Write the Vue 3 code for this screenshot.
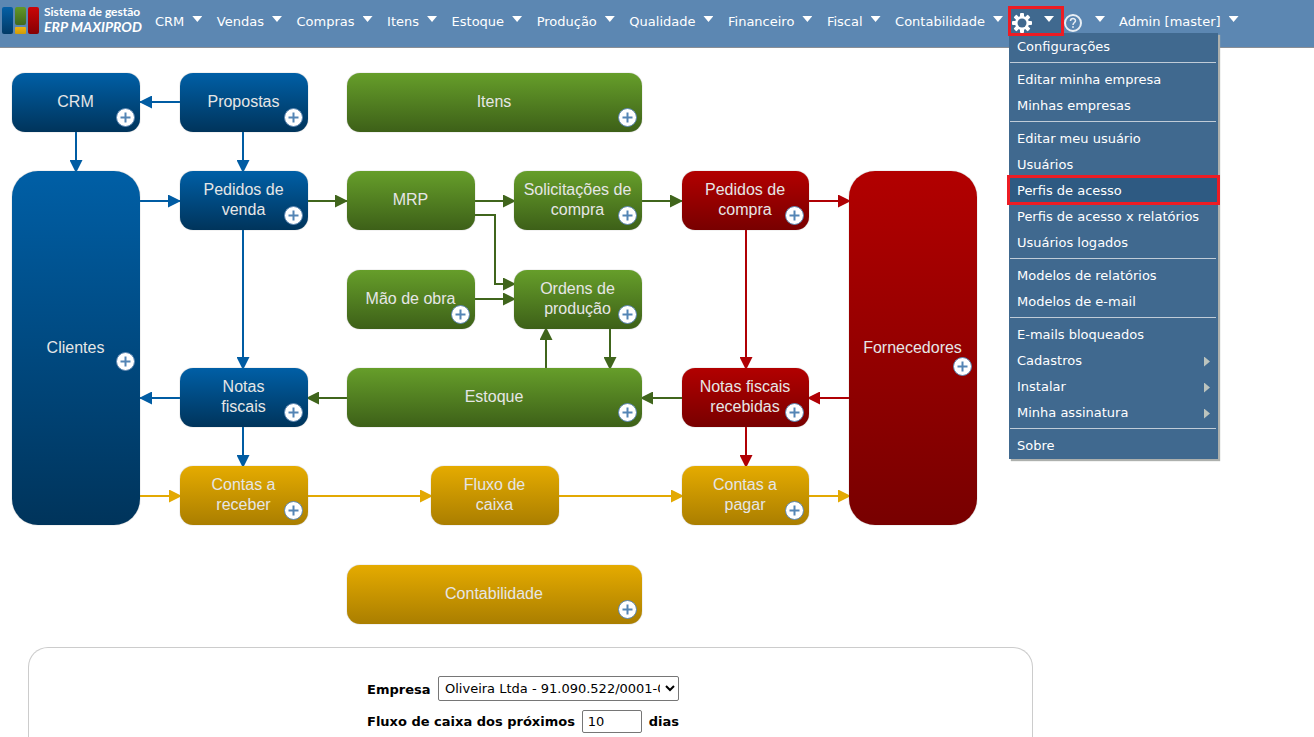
<script setup>
import { ref } from 'vue'

const menus = ['CRM', 'Vendas', 'Compras', 'Itens', 'Estoque', 'Produção', 'Qualidade', 'Financeiro', 'Fiscal', 'Contabilidade']

const settingsGroups = [
  [{ text: 'Configurações' }],
  [{ text: 'Editar minha empresa' }, { text: 'Minhas empresas' }],
  [
    { text: 'Editar meu usuário' },
    { text: 'Usuários' },
    { text: 'Perfis de acesso', marked: true },
    { text: 'Perfis de acesso x relatórios' },
    { text: 'Usuários logados' }
  ],
  [{ text: 'Modelos de relatórios' }, { text: 'Modelos de e-mail' }],
  [
    { text: 'E-mails bloqueados' },
    { text: 'Cadastros', sub: true },
    { text: 'Instalar', sub: true },
    { text: 'Minha assinatura', sub: true }
  ],
  [{ text: 'Sobre' }]
]

const canvas = { width: 989, height: 599 }

const nodes = [
  { text: 'CRM', tone: 'blue', x: 12, y: 25, w: 128, h: 59, plus: 35 },
  { text: 'Propostas', tone: 'blue', x: 180, y: 25, w: 128, h: 59, plus: 35 },
  { text: 'Itens', tone: 'green', x: 347, y: 25, w: 295, h: 59, plus: 35 },
  { text: 'Clientes', tone: 'blue', x: 12, y: 123, w: 128, h: 354, plus: 181, tall: true },
  { text: 'Pedidos de\nvenda', tone: 'blue', x: 180, y: 123, w: 128, h: 59, plus: 35 },
  { text: 'MRP', tone: 'green', x: 347, y: 123, w: 128, h: 59 },
  { text: 'Solicitações de\ncompra', tone: 'green', x: 514, y: 123, w: 128, h: 59, plus: 35 },
  { text: 'Pedidos de\ncompra', tone: 'red', x: 682, y: 123, w: 127, h: 59, plus: 35 },
  { text: 'Fornecedores', tone: 'red', x: 849, y: 123, w: 128, h: 354, plus: 186, tall: true },
  { text: 'Mão de obra', tone: 'green', x: 347, y: 222, w: 128, h: 59, plus: 35 },
  { text: 'Ordens de\nprodução', tone: 'green', x: 514, y: 222, w: 128, h: 59, plus: 35 },
  { text: 'Notas\nfiscais', tone: 'blue', x: 180, y: 320, w: 128, h: 59, plus: 35 },
  { text: 'Estoque', tone: 'green', x: 347, y: 320, w: 295, h: 59, plus: 35 },
  { text: 'Notas fiscais\nrecebidas', tone: 'red', x: 682, y: 320, w: 127, h: 59, plus: 35 },
  { text: 'Contas a\nreceber', tone: 'gold', x: 180, y: 418, w: 128, h: 59, plus: 35 },
  { text: 'Fluxo de\ncaixa', tone: 'gold', x: 431, y: 418, w: 128, h: 59 },
  { text: 'Contas a\npagar', tone: 'gold', x: 682, y: 418, w: 127, h: 59, plus: 35 },
  { text: 'Contabilidade', tone: 'gold', x: 347, y: 517, w: 295, h: 59, plus: 35 }
]

const tones = { blue: '#005ca3', green: '#40651c', red: '#b00004', gold: '#e3a903' }

const links = [
  { tone: 'blue', d: 'M180 54H140' },
  { tone: 'blue', d: 'M76 84V124' },
  { tone: 'blue', d: 'M243 84V124' },
  { tone: 'blue', d: 'M140 153H180' },
  { tone: 'green', d: 'M308 153H347' },
  { tone: 'green', d: 'M475 153H515' },
  { tone: 'green', d: 'M475 167H495V236H515' },
  { tone: 'green', d: 'M475 251H515' },
  { tone: 'green', d: 'M642 153H682' },
  { tone: 'red', d: 'M809 153H850' },
  { tone: 'blue', d: 'M243 182V321' },
  { tone: 'red', d: 'M746 182V321' },
  { tone: 'green', d: 'M546 320V280' },
  { tone: 'green', d: 'M610 281V321' },
  { tone: 'blue', d: 'M180 350H140' },
  { tone: 'green', d: 'M347 350H307' },
  { tone: 'green', d: 'M682 350H641' },
  { tone: 'red', d: 'M849 350H808' },
  { tone: 'blue', d: 'M243 379V419' },
  { tone: 'red', d: 'M746 379V419' },
  { tone: 'gold', d: 'M140 448H181' },
  { tone: 'gold', d: 'M308 448H432' },
  { tone: 'gold', d: 'M559 448H683' },
  { tone: 'gold', d: 'M809 448H850' }
]

const days = ref('10')
</script>

<template>
  <div class="page">
    <header class="topbar">
      <a class="brand" href="#" aria-label="Sistema de gestão ERP MAXIPROD">
        <svg class="logo" viewBox="0 0 36 28" width="36" height="28" aria-hidden="true">
          <defs>
            <linearGradient id="lb" x2="0" y2="1"><stop stop-color="#0560a6" /><stop offset="1" stop-color="#023a66" /></linearGradient>
            <linearGradient id="lg" x2="0" y2="1"><stop stop-color="#629728" /><stop offset="1" stop-color="#42691c" /></linearGradient>
            <linearGradient id="lr" x2="0" y2="1"><stop stop-color="#cb0508" /><stop offset="1" stop-color="#850003" /></linearGradient>
            <linearGradient id="ly" x2="0" y2="1"><stop stop-color="#edb312" /><stop offset="1" stop-color="#cf9a07" /></linearGradient>
          </defs>
          <rect x="0" y="0" width="11" height="27" rx="2" fill="url(#lb)" />
          <rect x="13" y="0" width="11" height="18" rx="2" fill="url(#lg)" />
          <rect x="13" y="20" width="11" height="7" rx="1" fill="url(#ly)" />
          <rect x="26" y="0" width="11" height="27" rx="2" fill="url(#lr)" />
        </svg>
        <span class="brand-text">
          <span class="brand-top">Sistema de gestão</span>
          <span class="brand-name">ERP MAXIPROD</span>
        </span>
      </a>

      <nav class="nav">
        <div class="menus">
          <button v-for="m in menus" :key="m" class="nav-item" type="button">
            {{ m }}<span class="caret"></span>
          </button>
        </div>

        <div class="settings">
          <button class="nav-icon active" type="button" aria-label="Configurações" aria-expanded="true">
            <svg viewBox="0 0 20 20" width="20" height="20" aria-hidden="true">
              <g fill="#fff">
                <rect v-for="a in 4" :key="a" x="8" y="0" width="4" height="20" rx="1" :transform="`rotate(${a * 45} 10 10)`" />
                <circle cx="10" cy="10" r="7" />
              </g>
              <circle cx="10" cy="10" r="4.500" fill="#40698f" />
            </svg>
            <span class="caret"></span>
          </button>

          <div class="dropdown">
            <ul v-for="(group, i) in settingsGroups" :key="i" class="group">
              <li v-for="item in group" :key="item.text">
                <a class="entry" :class="{ marked: item.marked }" href="#">
                  {{ item.text }}<span v-if="item.sub" class="sub"></span>
                </a>
              </li>
            </ul>
          </div>
        </div>

        <button class="nav-icon help" type="button" aria-label="Ajuda">
          <svg viewBox="0 0 20 20" width="20" height="20" fill="none" stroke="#e8eef4" aria-hidden="true">
            <circle cx="10" cy="10" r="8" stroke-width="2" />
            <path d="M7.500 8C7.500 4.800 12.500 4.800 12.500 7.700C12.500 9.500 10 9.500 10 12" stroke-width="1.500" />
            <path d="M10 13.200V14.800" stroke-width="1.800" />
          </svg>
          <span class="caret"></span>
        </button>
        <button class="nav-item" type="button">Admin [master]<span class="caret"></span></button>
      </nav>
    </header>

    <main class="content">
      <section class="diagram" :style="{ height: canvas.height + 'px' }">
        <svg class="links" :width="canvas.width" :height="canvas.height" aria-hidden="true">
          <defs>
            <marker
              v-for="(color, name) in tones" :id="'tip-' + name" :key="name"
              markerUnits="userSpaceOnUse" markerWidth="13" markerHeight="13" refX="12" refY="6.500" orient="auto"
            >
              <path d="M0 0L13 6.500L0 13Z" :fill="color" />
            </marker>
          </defs>
          <path
            v-for="l in links" :key="l.d" :d="l.d" :stroke="tones[l.tone]"
            stroke-width="2" fill="none" :marker-end="`url(#tip-${l.tone})`"
          />
        </svg>

        <div
          v-for="n in nodes" :key="n.text" class="node" :class="[n.tone, { tall: n.tall }]"
          :style="{ left: n.x + 'px', top: n.y + 'px', width: n.w + 'px', height: n.h + 'px' }"
        >
          <a class="node-label" href="#">{{ n.text }}</a>
          <button v-if="n.plus" class="plus" type="button" :aria-label="'Abrir ' + n.text" :style="{ top: n.plus + 'px' }">
            <svg viewBox="0 0 19 19" width="19" height="19" aria-hidden="true">
              <circle cx="9.500" cy="9.500" r="9" fill="#fff" stroke="#5d86b0" stroke-width="1" />
              <path d="M9.500 4.500V14.500M4.500 9.500H14.500" stroke="#5485b5" stroke-width="2" />
            </svg>
          </button>
        </div>
      </section>

      <section class="panel">
        <form class="filters" @submit.prevent>
          <div class="row">
            <label for="company">Empresa</label>
            <select id="company" class="company">
              <option>Oliveira Ltda - 91.090.522/0001-06</option>
            </select>
          </div>
          <div class="row">
            <label for="days">Fluxo de caixa dos próximos</label>
            <input id="days" v-model="days" class="days" type="text">
            <label for="days">dias</label>
          </div>
        </form>
      </section>
    </main>
  </div>
</template>

<style>
body {
  margin: 0;
  background: #fff;
}
</style>

<style scoped>
.page {
  display: flex;
  flex-direction: column;
  min-height: 100vh;
  font-family: Verdana, "DejaVu Sans", sans-serif;
  font-size: 13px;
  color: #000;
}

.page *,
.page {
  box-sizing: border-box;
}

button {
  padding: 0;
  border: 0;
  background: none;
  font: inherit;
  color: inherit;
  cursor: pointer;
}

.topbar {
  display: flex;
  align-items: flex-start;
  height: 48px;
  background: #5c87b2;
  border-bottom: 1px solid #8a8f96;
  color: #fff;
}

.brand {
  display: flex;
  gap: 5px;
  flex: none;
  width: 155px;
  padding: 7px 0 0 2px;
  color: #fff;
  text-decoration: none;
}

.logo {
  flex: none;
  overflow: visible;
}

.brand-text {
  display: flex;
  flex-direction: column;
  font-family: Lato, sans-serif;
  font-weight: 700;
  line-height: 15px;
  margin-top: -3px;
  padding-left: 1px;
  white-space: nowrap;
}

.brand-top {
  font-size: 12px;
}

.brand-name {
  font-size: 14px;
  font-style: italic;
}

.nav {
  display: flex;
  flex: 1;
  padding-top: 9px;
}

.menus {
  display: flex;
  justify-content: space-between;
  flex: 0 0 848px;
}

.nav-item {
  display: flex;
  align-items: center;
  flex: none;
  height: 24px;
  white-space: nowrap;
}

.caret {
  width: 10px;
  height: 6px;
  margin: 0 0 4px 8px;
  background: #fff;
  clip-path: polygon(0 0, 100% 0, 50% 100%);
}

.settings {
  position: relative;
  flex: none;
  margin-left: 8px;
}

.nav-icon {
  display: flex;
  align-items: center;
  height: 24px;
}

.nav-icon svg {
  margin-top: 3px;
}

.nav-icon .caret {
  margin-left: 12px;
}

.active {
  width: 50px;
  padding-left: 1px;
  background: #40698f;
  outline: 3px solid #ed1c24;
  position: relative;
  z-index: 2;
}

.help {
  padding: 0 14px 0 2px;
}

.dropdown {
  position: absolute;
  z-index: 1;
  top: 24px;
  left: -2px;
  width: 209px;
  padding-bottom: 1px;
  background: #40698f;
  box-shadow: 2px 2px 1px #adb0ad;
}

.group {
  margin: 0;
  padding: 0;
  list-style: none;
}

.group + .group::before {
  content: "";
  display: block;
  height: 1px;
  margin: 3px 2px 3px 1px;
  background: #c0ccd8;
}

.entry {
  display: flex;
  align-items: center;
  justify-content: space-between;
  height: 26px;
  padding: 0 8px;
  color: #fff;
  text-decoration: none;
  white-space: nowrap;
}

.marked {
  background: #2e5a82;
  outline: 3px solid #ed1c24;
  outline-offset: -1px;
}

.sub {
  width: 6px;
  height: 10px;
  margin-top: 3px;
  background: #bcc4be;
  clip-path: polygon(0 0, 100% 50%, 0 100%);
}

.content {
  display: flex;
  flex-direction: column;
  flex: 1;
}

.diagram {
  position: relative;
}

.links {
  display: block;
}

.node {
  position: absolute;
  border-radius: 13px;
  box-shadow: 0 0 1px #777;
}

.tall {
  border-radius: 26px;
}

.blue {
  background: linear-gradient(#005fa6, #00345b);
}

.green {
  background: linear-gradient(#669e2a, #3d6018);
}

.red {
  background: linear-gradient(#b20000, #780000);
}

.gold {
  background: linear-gradient(#e5ab00, #aa7e00);
}

.node-label {
  display: flex;
  align-items: center;
  justify-content: center;
  height: 100%;
  padding: 0 1px 1px 0;
  font-family: "Liberation Sans", Arial, sans-serif;
  font-size: 16px;
  line-height: 20px;
  color: #e6e6e6;
  text-align: center;
  text-decoration: none;
  white-space: pre;
}

.tall .node-label {
  padding-bottom: 0;
}

.plus {
  position: absolute;
  right: 5px;
  width: 19px;
  height: 19px;
}

.plus svg {
  display: block;
}

.panel {
  flex: 1;
  max-width: 1005px;
  width: calc(100% - 56px);
  margin-left: 28px;
  padding: 28px 15px 4px 0;
  border: 1px solid #ccc;
  border-bottom: 0;
  border-radius: 20px 20px 0 0;
}

.filters {
  display: flex;
  flex-direction: column;
  gap: 9px;
  width: 312px;
  margin: 0 auto;
}

.row {
  display: flex;
  align-items: flex-end;
  justify-content: space-between;
  font-weight: 700;
  line-height: 22px;
  white-space: nowrap;
}

.company {
  width: 241px;
  height: 25px;
  padding: 0 2px;
  border: 1px solid #767676;
  border-radius: 2px;
  background-color: #fff;
  font: inherit;
  font-weight: 400;
  color: #000;
}

.days {
  width: 60px;
  height: 23px;
  padding: 0 5px;
  border: 1px solid #767676;
  border-radius: 2px;
  font: inherit;
  font-weight: 400;
  color: #000;
}
</style>
